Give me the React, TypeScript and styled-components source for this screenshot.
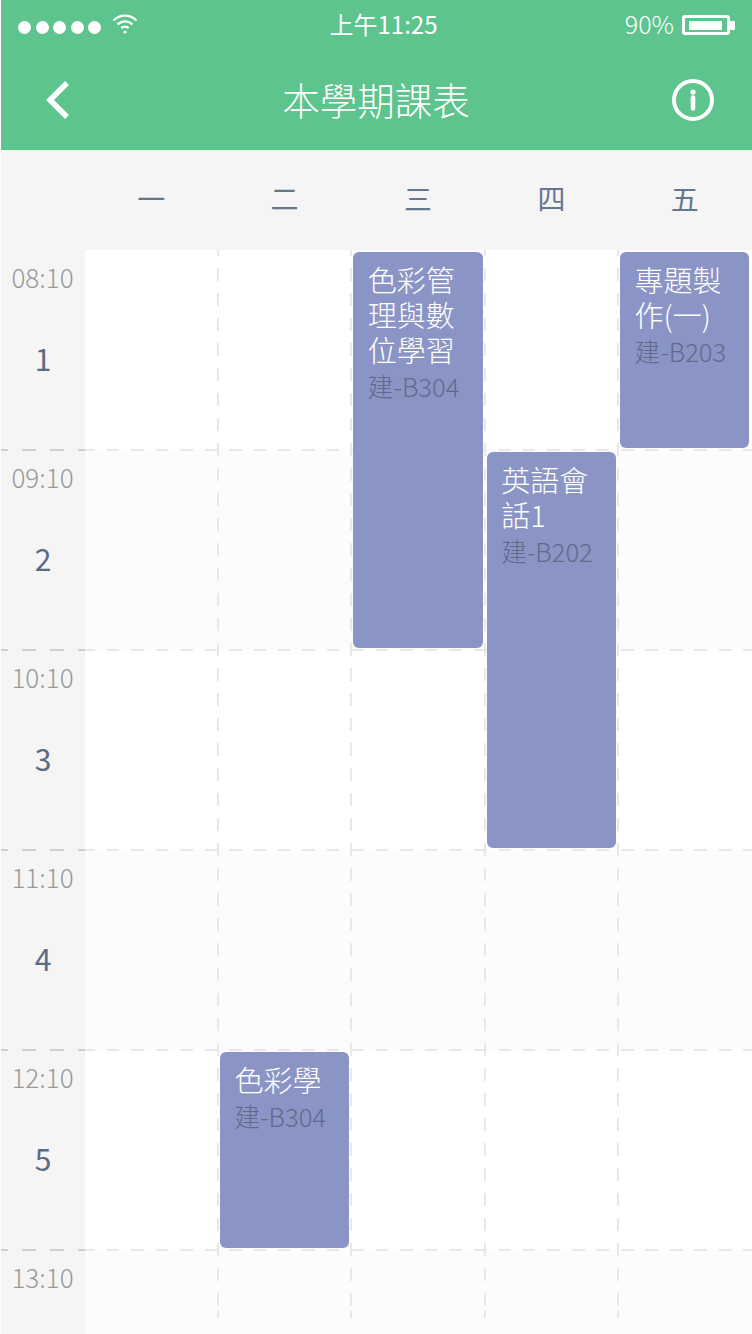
import styled, { createGlobalStyle } from 'styled-components';

const rowCount = 6;

const weekdays = ['一', '二', '三', '四', '五'];

const times = ['08:10', '09:10', '10:10', '11:10', '12:10', '13:10'];

const courses = [
  { day: 3, from: 1, span: 2, title: ['色彩管', '理與數', '位學習'], room: '建-B304' },
  { day: 5, from: 1, span: 1, title: ['專題製', '作(一)'], room: '建-B203' },
  { day: 4, from: 2, span: 2, title: ['英語會', '話1'], room: '建-B202' },
  { day: 2, from: 5, span: 1, title: ['色彩學'], room: '建-B304' },
];

const GlobalStyle = createGlobalStyle`
  html,
  body {
    margin: 0;
    padding: 0;
    background: #fff;
  }

  body {
    font-family: 'Noto Sans CJK TC', 'Noto Sans', sans-serif;
  }
`;

const Page = styled.div`
  width: 751px;
  height: 1334px;
  margin-left: 1px;
  overflow: hidden;
`;

const Header = styled.header`
  height: 150px;
  background: #5cc48c;
  color: #fff;
`;

const StatusBar = styled.div`
  height: 50px;
  display: grid;
  grid-template-columns: 1fr auto 1fr;
  align-items: center;
  padding: 0 17px;
`;

const Signal = styled.div`
  display: flex;
  align-items: center;
  gap: 4.5px;
  padding-top: 4px;
`;

const Dot = styled.span`
  width: 13px;
  height: 13px;
  border-radius: 50%;
  background: #fff;
`;

const WifiIcon = styled.svg`
  width: 26px;
  height: 20px;
  margin: -6px 0 0 6px;
`;

const Clock = styled.div`
  margin: 0 0 4px 14px;
  font-size: 24px;
  font-weight: 400;
`;

const Battery = styled.div`
  display: flex;
  justify-content: flex-end;
  align-items: center;
  gap: 8px;
`;

const BatteryLevel = styled.span`
  margin-bottom: 4px;
  font-size: 25px;
  font-weight: 300;
`;

const Nav = styled.nav`
  height: 100px;
  display: grid;
  grid-template-columns: 1fr auto 1fr;
  align-items: center;
  padding: 0 38px 0 44px;
`;

const Title = styled.h1`
  margin: 0 7px 3px 0;
  font-size: 37.5px;
  font-weight: 300;
`;

const InfoButton = styled.div`
  display: flex;
  justify-content: flex-end;
`;

const WeekRow = styled.div`
  height: 100px;
  display: grid;
  grid-template-columns: 84px repeat(5, 1fr);
  align-items: center;
  background: #f5f5f5;
`;

const Weekday = styled.div`
  margin: 0 1px 4px 0;
  font-size: 28px;
  font-weight: 400;
  line-height: 1;
  text-align: center;
  color: #67768f;
`;

const Table = styled.div`
  display: grid;
  grid-template-columns: 84px repeat(5, 1fr);
  grid-template-rows: repeat(5, 200px) 84px;
`;

const TimeCell = styled.div<{ $row: number }>`
  grid-column: 1;
  grid-row: ${({ $row }) => $row};
  display: flex;
  flex-direction: column;
  align-items: center;
  background: #f5f5f5;
`;

const Time = styled.div`
  margin: 8px 1px 0 0;
  font-size: 26px;
  font-weight: 300;
  line-height: 38px;
  color: #999;
`;

const Period = styled.div`
  margin-top: 40px;
  font-size: 30px;
  font-weight: 400;
  line-height: 44px;
  color: #5a6b86;
`;

const Stripe = styled.div<{ $row: number }>`
  grid-column: 2 / -1;
  grid-row: ${({ $row }) => $row};
  background: ${({ $row }) => ($row % 2 === 1 ? '#fff' : '#fcfcfc')};
`;

const VLine = styled.div<{ $day: number }>`
  grid-column: ${({ $day }) => $day + 1};
  grid-row: 1 / -1;
  justify-self: start;
  width: 2px;
  margin: 0 0 16px -1.5px;
  background: repeating-linear-gradient(to bottom, #e8e8e8 0 13px, transparent 13px 25px);
  background-position: 0 -7px;
`;

const HLine = styled.div<{ $row: number }>`
  grid-column: 1 / -1;
  grid-row: ${({ $row }) => $row};
  align-self: start;
  height: 2px;
  margin-top: -1px;
  background:
    repeating-linear-gradient(to right, #cfcfcf 0 7px, transparent 7px 21px, #cfcfcf 21px 28px) 0 0 / 84px 2px no-repeat,
    repeating-linear-gradient(to right, #e8e8e8 0 9.5px, transparent 9.5px 21.5px, #e8e8e8 21.5px 24.5px) 84px 0 / 100% 2px no-repeat;
`;

const Course = styled.div<{ $day: number; $from: number; $span: number }>`
  grid-column: ${({ $day }) => $day + 1};
  grid-row: ${({ $from, $span }) => `${$from} / span ${$span}`};
  margin: 2px 2.5px 2px 1.5px;
  padding: 10px 14.5px;
  border-radius: 6px;
  background: #8b95c5;
`;

const CourseTitle = styled.div`
  font-size: 29px;
  font-weight: 300;
  line-height: 35px;
  color: #fff;
`;

const Room = styled.div`
  font-size: 25.6px;
  font-weight: 300;
  line-height: 38px;
  color: #606b8c;
`;

export default function App() {
  return (
    <Page>
      <GlobalStyle />
      <Header>
        <StatusBar>
          <Signal>
            {[0, 1, 2, 3, 4].map((i) => (
              <Dot key={i} />
            ))}
            <WifiIcon viewBox="0 0 26 20" fill="none" stroke="#fff" strokeWidth="2.4">
              <path d="M1.5 6.5a16 16 0 0 1 23 0" />
              <path d="M5.5 10.5a10.5 10.5 0 0 1 15 0" />
              <path d="M9.3 14.2a5.2 5.2 0 0 1 7.4 0" />
              <circle cx="13" cy="18" r="1.6" fill="#fff" stroke="none" />
            </WifiIcon>
          </Signal>
          <Clock>上午11:25</Clock>
          <Battery>
            <BatteryLevel>90%</BatteryLevel>
            <svg width="53" height="20" viewBox="0 0 53 20" fill="none">
              <rect x="1.5" y="1.5" width="45" height="17" rx="1.5" stroke="#fff" strokeWidth="3" />
              <rect x="7" y="6" width="33" height="9" fill="#fff" />
              <rect x="48" y="6" width="5" height="9" rx="1" fill="#fff" />
            </svg>
          </Battery>
        </StatusBar>
        <Nav>
          <svg width="26" height="40" viewBox="0 0 26 40" fill="none">
            <path d="M22 3 5 20l17 17" stroke="#fff" strokeWidth="5.6" />
          </svg>
          <Title>本學期課表</Title>
          <InfoButton>
            <svg width="42" height="42" viewBox="0 0 42 42" fill="none">
              <circle cx="21" cy="21" r="19" stroke="#fff" strokeWidth="4" />
              <circle cx="21" cy="13" r="2.6" fill="#fff" />
              <path d="M21 18.5v11" stroke="#fff" strokeWidth="4.6" strokeLinecap="round" />
            </svg>
          </InfoButton>
        </Nav>
      </Header>
      <WeekRow>
        <span />
        {weekdays.map((day) => (
          <Weekday key={day}>{day}</Weekday>
        ))}
      </WeekRow>
      <Table>
        {times.map((time, i) => (
          <TimeCell key={time} $row={i + 1}>
            <Time>{time}</Time>
            {i < rowCount - 1 && <Period>{i + 1}</Period>}
          </TimeCell>
        ))}
        {times.map((time, i) => (
          <Stripe key={time} $row={i + 1} />
        ))}
        {[1, 2, 3, 4].map((i) => (
          <VLine key={i} $day={i + 1} />
        ))}
        {[2, 3, 4, 5, 6].map((row) => (
          <HLine key={row} $row={row} />
        ))}
        {courses.map((course) => (
          <Course key={course.room + course.day} $day={course.day} $from={course.from} $span={course.span}>
            <CourseTitle>
              {course.title.map((line) => (
                <div key={line}>{line}</div>
              ))}
            </CourseTitle>
            <Room>{course.room}</Room>
          </Course>
        ))}
      </Table>
    </Page>
  );
}
